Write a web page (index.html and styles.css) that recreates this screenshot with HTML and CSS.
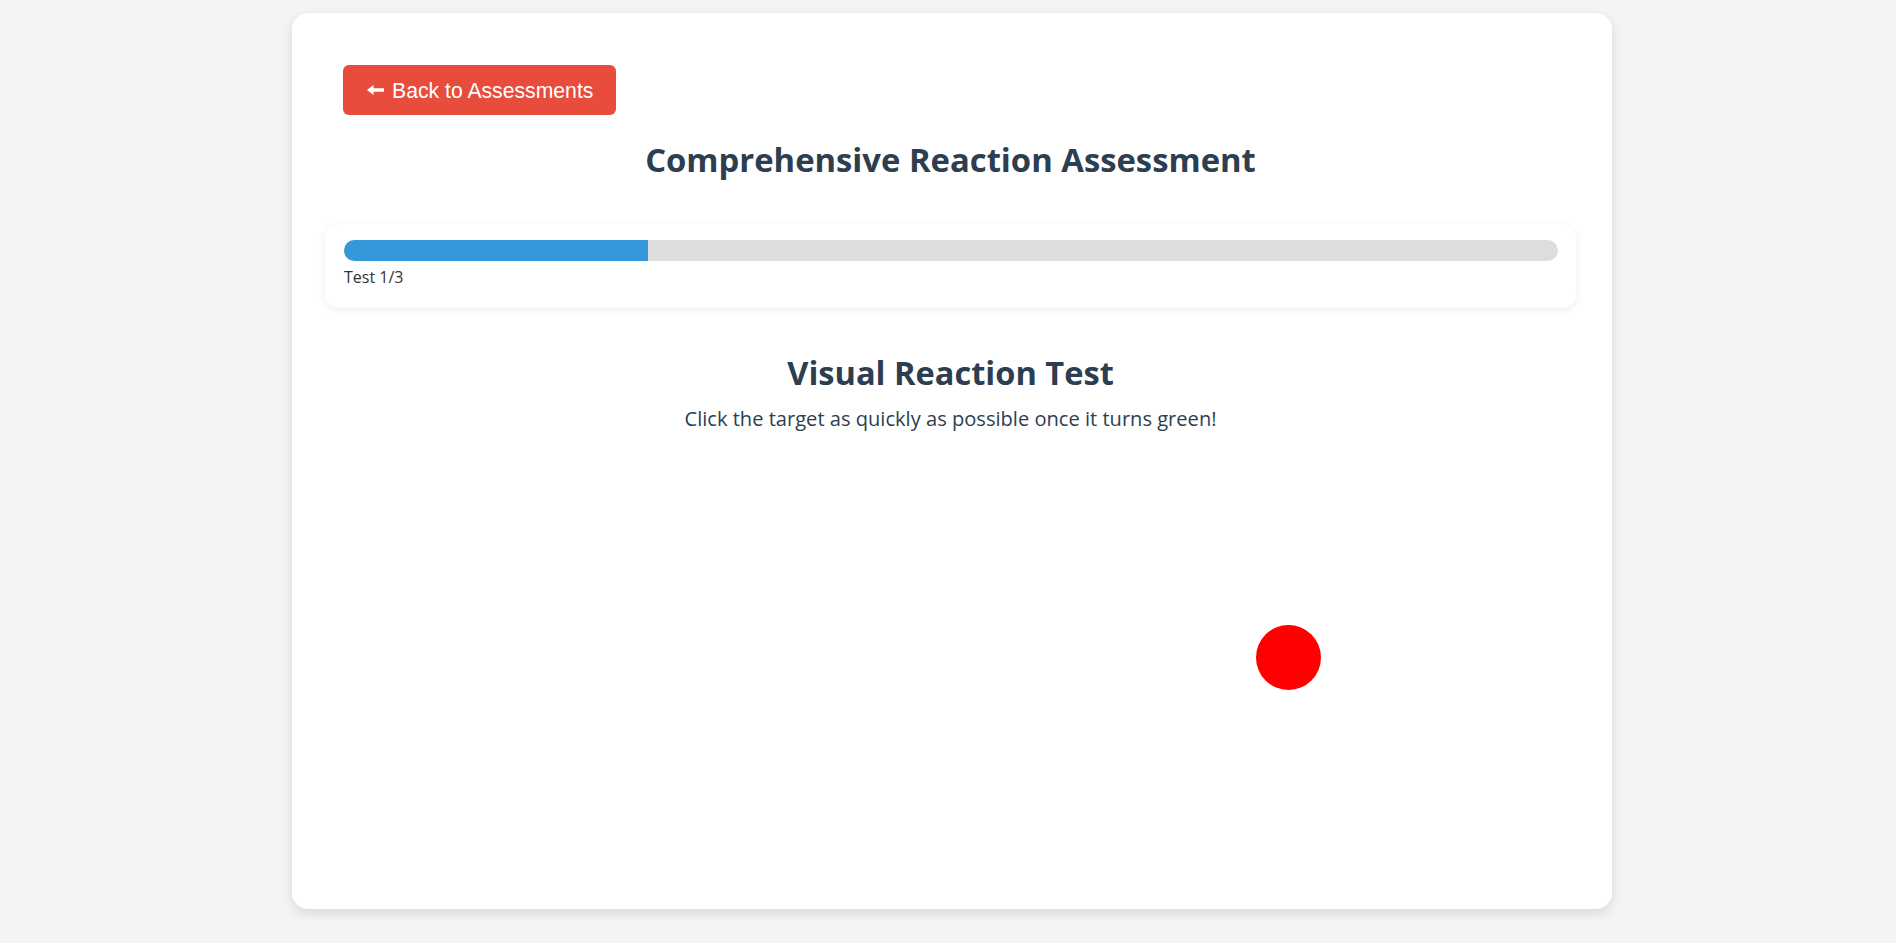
FILE: index.html
```html
<!DOCTYPE html>
<html lang="en">
<head>
<meta charset="utf-8">
<title>Comprehensive Reaction Assessment</title>
<link rel="stylesheet" href="styles.css">
</head>
<body>
<main class="card">
  <div class="top-bar">
    <button class="back-btn" type="button">
      <svg class="back-icon" width="17" height="10" viewBox="0 0 17 10" aria-hidden="true"><path d="M0 5 L6.5 0 L6.5 3.2 L17 3.2 L17 6.8 L6.5 6.8 L6.5 10 Z" fill="#fff"/></svg>
      <span>Back to Assessments</span>
    </button>
  </div>
  <h1 class="title">Comprehensive Reaction Assessment</h1>
  <section class="progress-box">
    <div class="progress-track"><div class="progress-fill" style="width: 25%"></div></div>
    <div class="progress-label">Test 1/3</div>
  </section>
  <section class="test">
    <h2 class="test-title">Visual Reaction Test</h2>
    <p class="test-desc">Click the target as quickly as possible once it turns green!</p>
    <div class="test-area">
      <div class="target"></div>
    </div>
  </section>
</main>
</body>
</html>
```
FILE: styles.css
```css
* { box-sizing: border-box; }
html, body { margin: 0; }
body {
  background: #f4f4f4;
  padding: 13px 0 20px 8px;
  font-family: "Open Sans", "Noto Sans", sans-serif;
  color: #2c3e50;
}
.card {
  width: 1320px;
  margin: 0 auto;
  background: #fff;
  border-radius: 16px;
  box-shadow: 0 4px 12px rgba(0,0,0,0.12);
  padding: 52px 36px 36px 33px;
}
.top-bar { display: flex; padding-left: 18px; }
.back-btn {
  display: flex;
  align-items: center;
  height: 50px;
  padding: 2px 23px 0 24px;
  border: none;
  border-radius: 6px;
  background: #e74c3c;
  color: #fff;
  font-family: "Liberation Sans", Arial, sans-serif;
  font-size: 21.2px;
  cursor: pointer;
}
.back-icon { margin-right: 8px; margin-top: -2px; }
.title {
  margin: 25px 0 0;
  text-align: center;
  font-size: 32.8px;
  line-height: 1.2;
  font-weight: 700;
  color: #2c3e50;
}
.progress-box {
  margin-top: 45px;
  background: #fff;
  border-radius: 14px;
  box-shadow: 0 2px 8px rgba(0,0,0,0.07);
  padding: 16px 18px 18px 19px;
}
.progress-track {
  height: 21px;
  background: #ddd;
  border-radius: 11px;
  overflow: hidden;
}
.progress-fill {
  height: 100%;
  background: #3498db;
}
.progress-label {
  margin-top: 5px;
  font-size: 16px;
  line-height: 1.45;
  color: #333;
}
.test { text-align: center; }
.test-title {
  margin: 45px 0 0;
  font-size: 32.6px;
  line-height: 1.2;
  font-weight: 700;
  color: #2c3e50;
}
.test-desc {
  margin: 12px 0 0;
  font-size: 20.1px;
  line-height: 1.5;
  color: #2c3e50;
}
.test-area {
  position: relative;
  margin-top: 19px;
  height: 420px;
}
.target {
  position: absolute;
  left: 931px;
  top: 172px;
  width: 65px;
  height: 65px;
  border-radius: 50%;
  background: #ff0000;
  cursor: pointer;
}
```
